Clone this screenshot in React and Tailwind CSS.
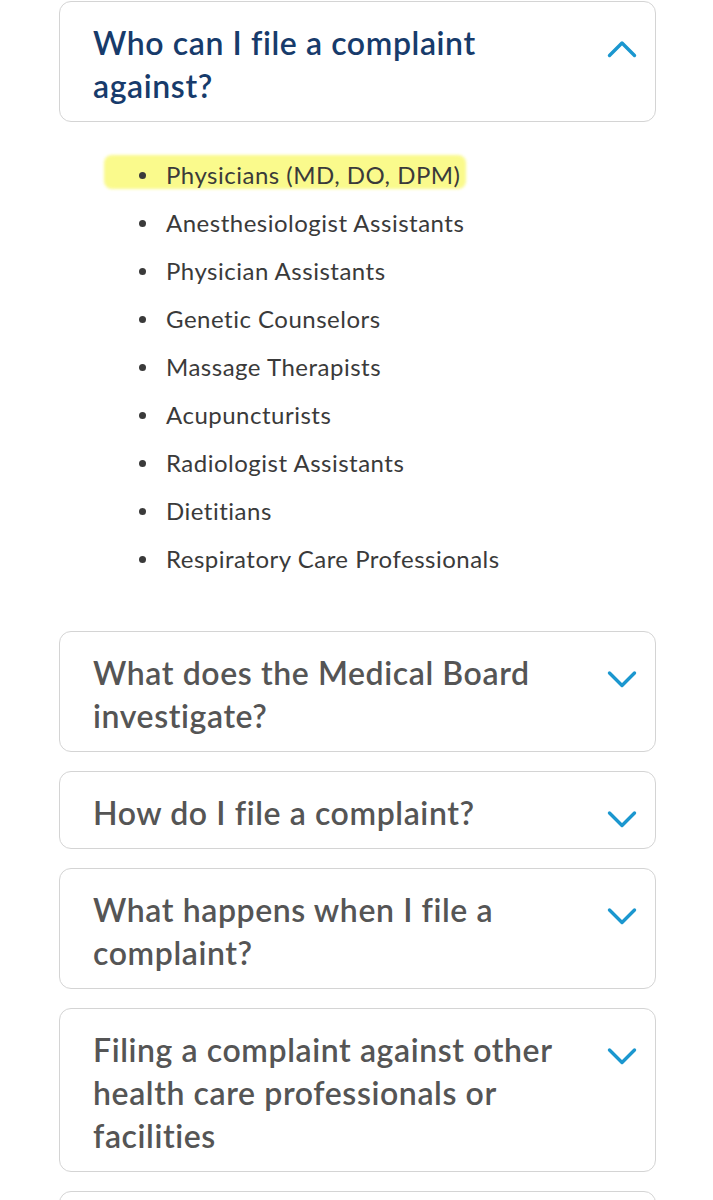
import { useState } from 'react';

const professions = [
  'Physicians (MD, DO, DPM)',
  'Anesthesiologist Assistants',
  'Physician Assistants',
  'Genetic Counselors',
  'Massage Therapists',
  'Acupuncturists',
  'Radiologist Assistants',
  'Dietitians',
  'Respiratory Care Professionals',
];

const questions = [
  { id: 'who', title: 'Who can I file a complaint against?' },
  { id: 'what', title: 'What does the Medical Board investigate?' },
  { id: 'how', title: 'How do I file a complaint?' },
  { id: 'happens', title: 'What happens when I file a complaint?' },
  { id: 'other', title: 'Filing a complaint against other health care professionals or facilities' },
  { id: 'more', title: 'Can I remain anonymous?' },
];

const Chevron = ({ up }) => (
  <svg className="mt-[13px] h-[30px] w-[30px] shrink-0" viewBox="0 0 30 30" fill="none">
    <path
      d={up ? 'M2.5 21.5 L15 9 L27.5 21.5' : 'M2.5 9 L15 21.5 L27.5 9'}
      stroke="#1b97cf"
      strokeWidth="3.4"
      strokeLinecap="round"
      strokeLinejoin="round"
    />
  </svg>
);

const App = () => {
  const [open, setOpen] = useState('who');

  return (
    <div className="min-h-[1200px] bg-white pt-px pl-[59px] pr-[57px] font-['Lato','Liberation_Sans',sans-serif]">
      <div className="flex flex-col">
        {questions.map((q) => {
          const isOpen = open === q.id;
          return (
            <div key={q.id} className="mb-[19px]">
              <button
                type="button"
                onClick={() => setOpen(isOpen ? '' : q.id)}
                className="flex w-full items-start justify-between rounded-[12px] border border-[#d4d4d4] bg-white pt-[19px] pb-[14px] pl-[33px] pr-[18px] text-left"
              >
                <span
                  className={`max-w-[482px] text-[32px] font-semibold leading-[43px] tracking-[0.6px] ${
                    isOpen ? 'text-[#173b6b]' : 'text-[#555555]'
                  }`}
                >
                  {q.title}
                </span>
                <Chevron up={isOpen} />
              </button>

              {isOpen && q.id === 'who' && (
                <ul className="pt-[29px] pb-[29px] pl-[80px]">
                  {professions.map((p, i) => (
                    <li key={p} className="relative flex h-[48px] items-center text-[24px] text-[#3a3a3a]">
                      {i === 0 && (
                        <span className="absolute left-[-35px] top-[4px] h-[34px] w-[362px] rounded-[8px] bg-[#fafa8c] blur-[1.5px]" />
                      )}
                      <span className="relative mr-[20px] h-[7px] w-[7px] rounded-full bg-[#3a3a3a]" />
                      <span className="relative tracking-[0.5px]">{p}</span>
                    </li>
                  ))}
                </ul>
              )}
            </div>
          );
        })}
      </div>
    </div>
  );
};

export default App;
